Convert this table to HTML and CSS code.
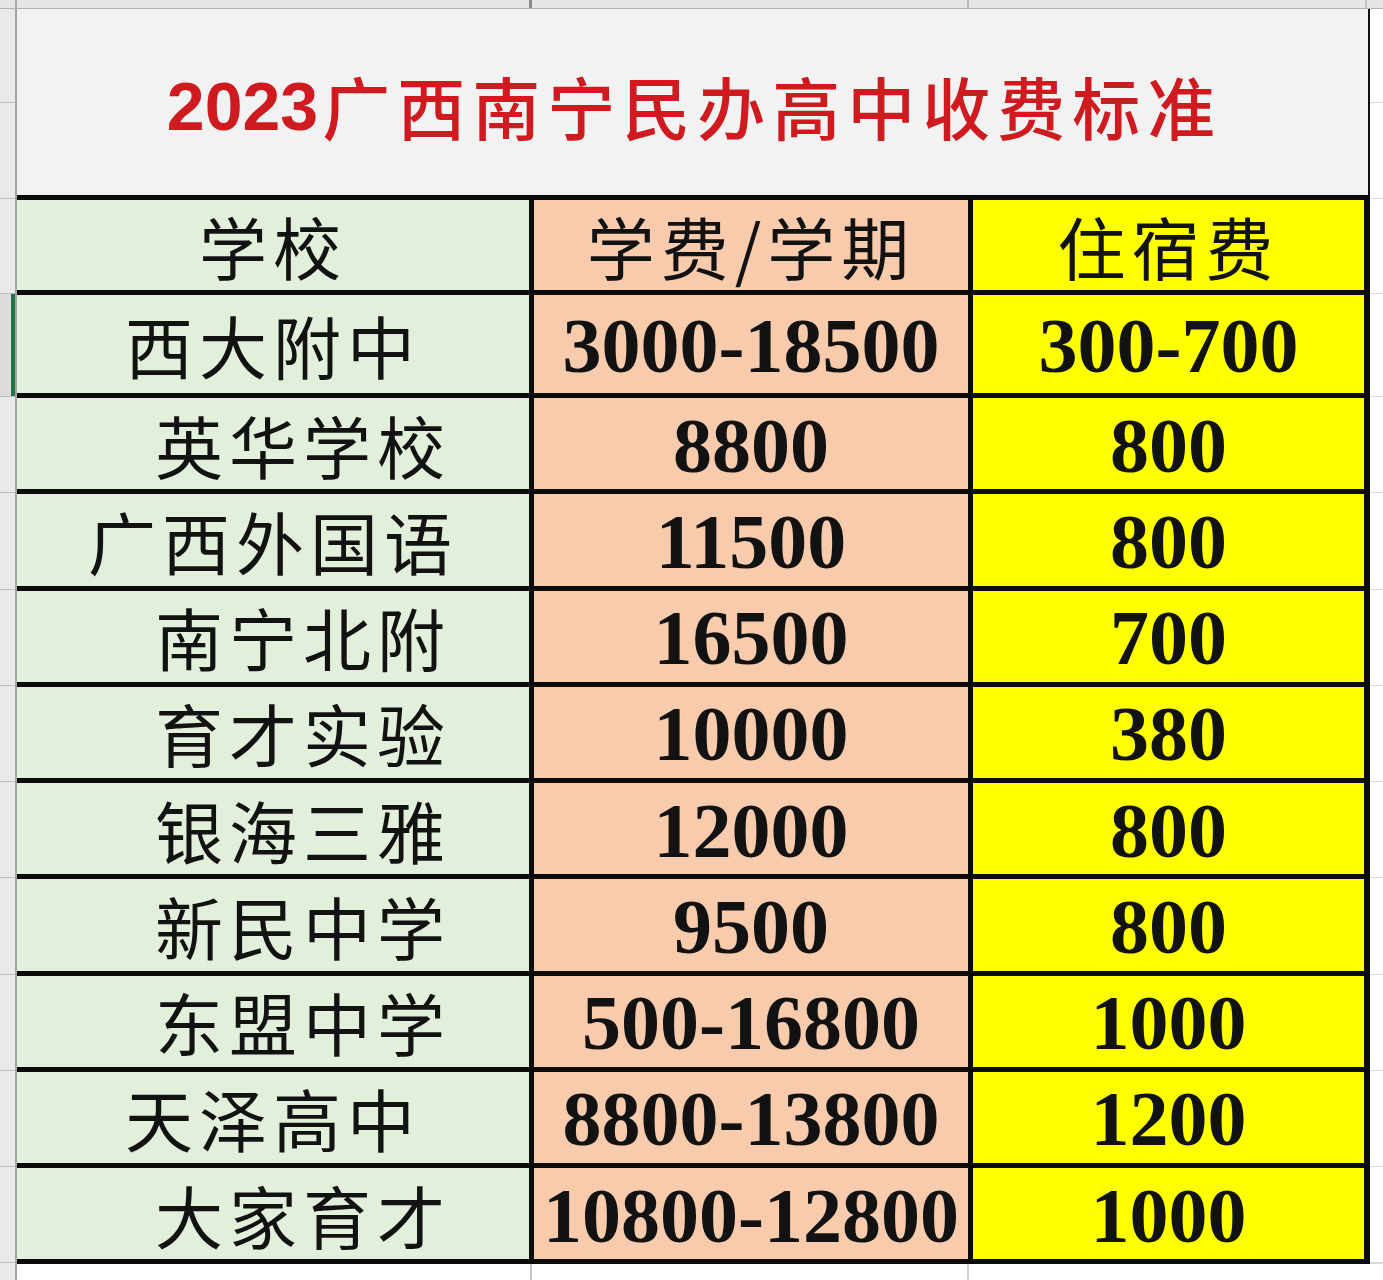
FILE: index.html
```html
<!DOCTYPE html>
<html lang="zh-CN">
<head>
<meta charset="utf-8">
<title>2023广西南宁民办高中收费标准</title>
<link rel="stylesheet" href="styles.css">
</head>
<body>
<div class="colbar">
  <div class="cb cb-corner"></div>
  <div class="cb cb-a"></div>
  <div class="cb cb-b"></div>
  <div class="cb cb-c"></div>
  <div class="cb cb-d"></div>
</div>
<div class="sheet">
  <div class="rowheads">
    <div class="rh h94"></div>
    <div class="rh h96"></div>
    <div class="rh h95"></div>
    <div class="rh h103 selected"></div>
    <div class="rh hrow"></div>
    <div class="rh hrow"></div>
    <div class="rh hrow"></div>
    <div class="rh hrow"></div>
    <div class="rh hrow"></div>
    <div class="rh hrow"></div>
    <div class="rh hrow"></div>
    <div class="rh hrow"></div>
    <div class="rh hrow"></div>
    <div class="rh hrest"></div>
  </div>
  <div class="main">
    <div class="title"><span class="title-num">2023</span>广西南宁民办高中收费标准</div>
    <div class="table">
      <div class="cell c1 zh">学校</div>
      <div class="cell c2 zh">学费/学期</div>
      <div class="cell c3 zh">住宿费</div>

      <div class="cell c1 zh">西大附中</div>
      <div class="cell c2 num">3000-18500</div>
      <div class="cell c3 num">300-700</div>

      <div class="cell c1 zh shift">英华学校</div>
      <div class="cell c2 num">8800</div>
      <div class="cell c3 num">800</div>

      <div class="cell c1 zh">广西外国语</div>
      <div class="cell c2 num">11500</div>
      <div class="cell c3 num">800</div>

      <div class="cell c1 zh shift">南宁北附</div>
      <div class="cell c2 num">16500</div>
      <div class="cell c3 num">700</div>

      <div class="cell c1 zh shift">育才实验</div>
      <div class="cell c2 num">10000</div>
      <div class="cell c3 num">380</div>

      <div class="cell c1 zh shift">银海三雅</div>
      <div class="cell c2 num">12000</div>
      <div class="cell c3 num">800</div>

      <div class="cell c1 zh shift">新民中学</div>
      <div class="cell c2 num">9500</div>
      <div class="cell c3 num">800</div>

      <div class="cell c1 zh shift">东盟中学</div>
      <div class="cell c2 num">500-16800</div>
      <div class="cell c3 num">1000</div>

      <div class="cell c1 zh">天泽高中</div>
      <div class="cell c2 num">8800-13800</div>
      <div class="cell c3 num">1200</div>

      <div class="cell c1 zh shift">大家育才</div>
      <div class="cell c2 num">10800-12800</div>
      <div class="cell c3 num">1000</div>
    </div>
    <div class="below">
      <div class="bl bl-a"></div>
      <div class="bl bl-b"></div>
      <div class="bl bl-c"></div>
    </div>
  </div>
  <div class="gutter">
    <div class="gt h94"></div>
    <div class="gt h96"></div>
    <div class="gt h95"></div>
    <div class="gt h103"></div>
    <div class="gt hrow"></div>
    <div class="gt hrow"></div>
    <div class="gt hrow"></div>
    <div class="gt hrow"></div>
    <div class="gt hrow"></div>
    <div class="gt hrow"></div>
    <div class="gt hrow"></div>
    <div class="gt hrow"></div>
    <div class="gt hrow"></div>
    <div class="gt hrest"></div>
  </div>
</div>
</body>
</html>
```

FILE: styles.css
```css
* { box-sizing: border-box; }

html, body {
  margin: 0;
  padding: 0;
  background: #ffffff;
}

body {
  width: 1383px;
  height: 1280px;
  overflow: hidden;
  font-family: "Noto Sans CJK SC", "Liberation Sans", sans-serif;
}

/* column header strip at the very top */
.colbar {
  display: grid;
  grid-template-columns: 17px 515px 437px 398px 16px;
  height: 9px;
  background: #e6e6e6;
  border-bottom: 1px solid #b3b3b3;
}
.cb { height: 100%; }
.cb-corner { border-right: 2px solid #a8a8a8; }
.cb-a { border-right: 3px solid #8a8a8a; }
.cb-b { border-right: 2px solid #b8b8b8; }
.cb-c { border-right: 2px solid #c4c4c4; }

.sheet {
  display: flex;
  height: 1271px;
}

/* row-number strip on the left */
.rowheads {
  width: 17px;
  flex: none;
  display: flex;
  flex-direction: column;
  background: #e9e9e9;
  border-right: 2px solid #a3a3a3;
}
.rh {
  border-bottom: 1px solid #bdbdbd;
  flex: none;
}
.rh.selected {
  background: #dcdcdc;
  box-shadow: inset -4px 0 0 #217346;
}
.h94 { height: 94px; }
.h96 { height: 96px; }
.h95 { height: 95px; }
.h103 { height: 103px; }
.hrow { height: 96.25px; }
.hrest { flex: 1; border-bottom: none; }

/* right-hand empty grid area */
.gutter {
  flex: 1;
  display: flex;
  flex-direction: column;
  background: #ffffff;
}
.gt {
  border-bottom: 1px solid #d9d9d9;
  flex: none;
}

.main {
  width: 1353px;
  flex: none;
  display: flex;
  flex-direction: column;
}

.title {
  height: 186px;
  background: #f2f2f2;
  border-right: 2px solid #111111;
  display: flex;
  align-items: center;
  justify-content: center;
  padding-top: 8px;
  padding-left: 4px;
  font-family: "Noto Sans CJK SC", sans-serif;
  font-size: 68px;
  font-weight: 500;
  letter-spacing: 7px;
  color: #cf1b20;
  line-height: 1;
}
.title-num {
  font-family: "Liberation Sans", "Noto Sans CJK SC", sans-serif;
  font-weight: 700;
  letter-spacing: 0;
  margin-right: 4px;
}

.table {
  display: grid;
  grid-template-columns: 512px 434px 391px;
  grid-template-rows: 90px 98px repeat(9, 91.25px);
  column-gap: 5px;
  row-gap: 5px;
  padding: 5px 6px 5px 0;
  background: #0b0b0b;
}

.cell {
  display: flex;
  align-items: center;
  justify-content: center;
  color: #121212;
  line-height: 1;
  white-space: nowrap;
}
.c1 { background: #e2efda; }
.c2 { background: #f8cbad; }
.c3 { background: #ffff00; }

.zh {
  font-family: "Noto Sans CJK SC", sans-serif;
  font-size: 68px;
  font-weight: 400;
  letter-spacing: 6px;
  padding-top: 2px;
}
.shift { padding-left: 60px; }

.num {
  font-family: "Liberation Serif", "Times New Roman", serif;
  font-size: 78px;
  font-weight: 700;
  letter-spacing: 0;
  padding-top: 4px;
}

.below {
  flex: 1;
  display: grid;
  grid-template-columns: 515px 437px 401px;
}
.bl-a { border-right: 2px solid #c8c8c8; }
.bl-b { border-right: 2px solid #d0d0d0; }
```
